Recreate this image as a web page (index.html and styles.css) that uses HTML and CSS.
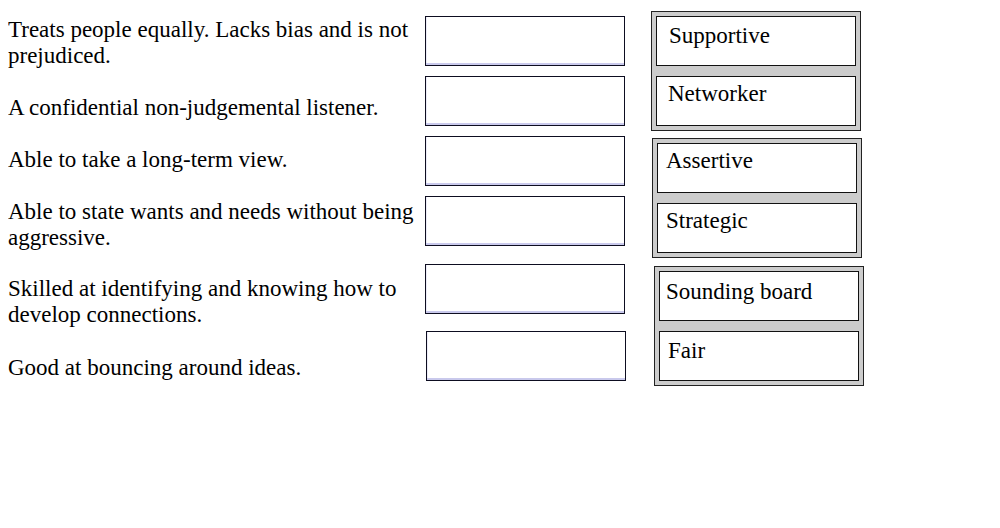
FILE: index.html
```html
<!DOCTYPE html>
<html lang="en">
<head>
<meta charset="utf-8">
<title>Matching activity</title>
<link rel="stylesheet" href="styles.css">
</head>
<body>
<div class="activity">
  <div class="pairs">
    <div class="row">
      <p class="prompt prompt--r1">Treats people equally. Lacks bias and is not prejudiced.</p>
      <div class="drop"></div>
    </div>
    <div class="row">
      <p class="prompt prompt--r2">A confidential non-judgemental listener.</p>
      <div class="drop"></div>
    </div>
    <div class="row">
      <p class="prompt prompt--r3">Able to take a long-term view.</p>
      <div class="drop"></div>
    </div>
    <div class="row">
      <p class="prompt prompt--r4">Able to state wants and needs without being aggressive.</p>
      <div class="drop"></div>
    </div>
    <div class="row row--spaced">
      <p class="prompt prompt--r5">Skilled at identifying and knowing how to develop connections.</p>
      <div class="drop"></div>
    </div>
    <div class="row row--spaced2">
      <p class="prompt prompt--r6">Good at bouncing around ideas.</p>
      <div class="drop drop--shift"></div>
    </div>
  </div>
  <div class="bank">
    <div class="group">
      <div class="card card--a">Supportive</div>
      <div class="card card--b">Networker</div>
    </div>
    <div class="group group--2">
      <div class="card card--c">Assertive</div>
      <div class="card card--c">Strategic</div>
    </div>
    <div class="group group--3">
      <div class="card card--d">Sounding board</div>
      <div class="card card--e">Fair</div>
    </div>
  </div>
</div>
</body>
</html>
```

FILE: styles.css
```css
html, body {
  background: #ffffff;
}

body {
  margin: 8px;
  font-family: "Liberation Serif", "Times New Roman", serif;
  font-size: 23px;
  line-height: 26px;
  color: #000000;
}

.activity {
  display: flex;
  align-items: flex-start;
}

.pairs {
  display: flex;
  flex-direction: column;
  gap: 10px;
  padding-top: 8px;
}

.row {
  display: flex;
  height: 50px;
}

.row--spaced {
  margin-top: 8px;
}

.row--spaced2 {
  margin-top: 7px;
}

.prompt {
  flex: 0 0 417px;
  margin: 0;
}

.prompt--r1 { padding-top: 1px; }
.prompt--r2 { padding-top: 19px; }
.prompt--r3 { padding-top: 11px; }
.prompt--r4 { padding-top: 3px; }
.prompt--r5 { padding-top: 12px; }
.prompt--r6 { padding-top: 24px; }

.drop {
  flex: 0 0 200px;
  height: 50px;
  box-sizing: border-box;
  border: 1px solid #0d0d20;
  background: #ffffff;
  box-shadow: inset 0 -2px 0 #c9c9ec, inset 1px 0 0 #ececf8;
}

.drop--shift {
  margin-left: 1px;
}

.bank {
  display: flex;
  flex-direction: column;
  margin-left: 25px;
  padding-top: 3px;
}

.group {
  box-sizing: border-box;
  width: 210px;
  display: flex;
  flex-direction: column;
  gap: 10px;
  padding: 4px;
  border: 1px solid #222222;
  background: #cccccc;
}

.group--2 {
  margin-top: 7px;
  margin-left: 1px;
}

.group--3 {
  margin-top: 8px;
  margin-left: 3px;
}

.card {
  box-sizing: border-box;
  height: 50px;
  border: 1px solid #111111;
  background: #ffffff;
  padding: 4px 10px 0 10px;
  white-space: nowrap;
}

.card--a { padding-top: 6px; padding-left: 12px; }
.card--b { padding-top: 4px; padding-left: 11px; }
.card--c { padding-top: 4px; padding-left: 8px; }
.card--d { padding-top: 7px; padding-left: 6px; }
.card--e { padding-top: 6px; padding-left: 8px; }
```
